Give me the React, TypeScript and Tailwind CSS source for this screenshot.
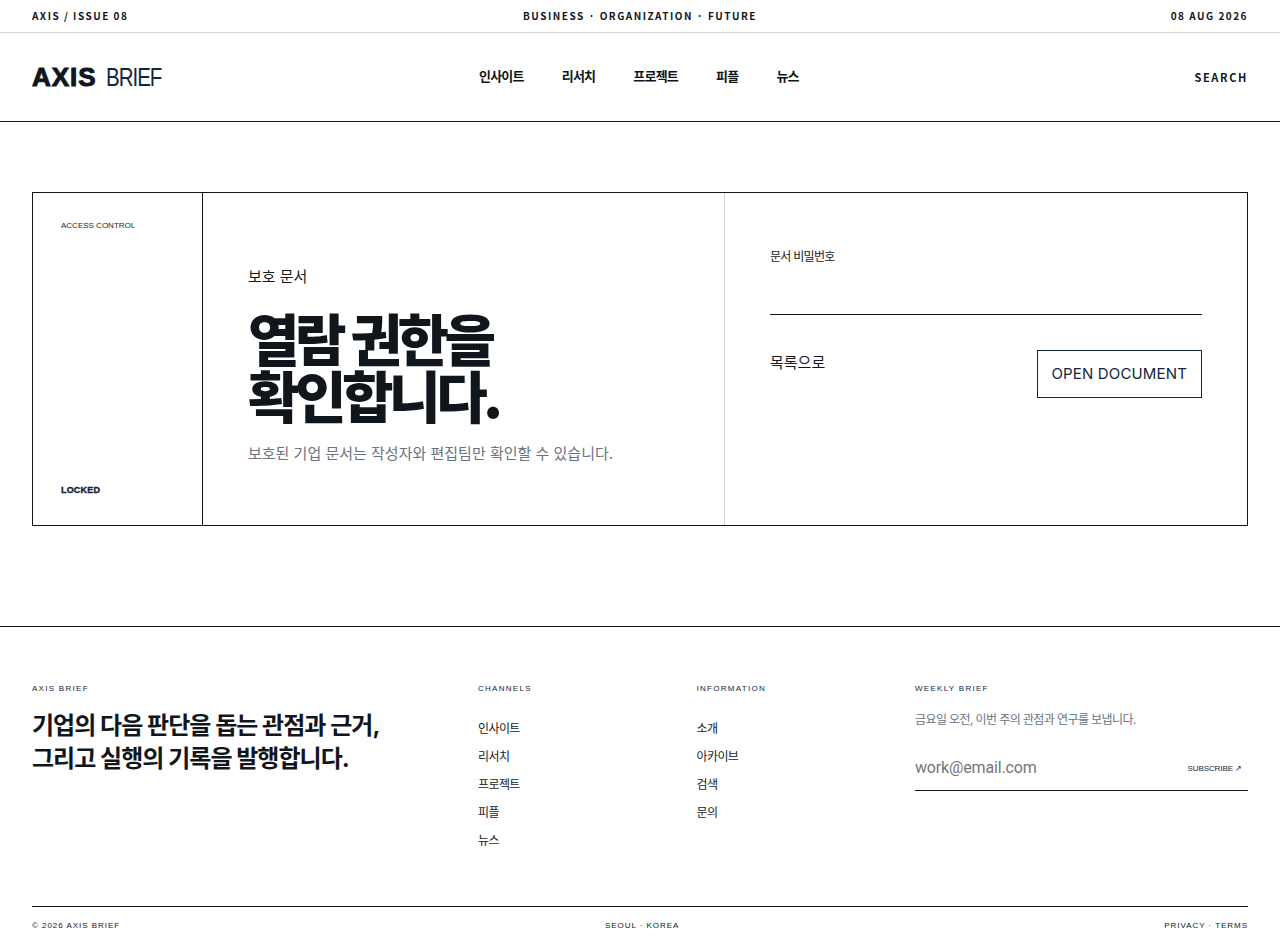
const sans = "font-['Liberation_Sans_Narrow','Noto_Sans_CJK_KR',sans-serif]";
const arial = "font-['Liberation_Sans',sans-serif]";
const kr = "font-['Inter','Noto_Sans_CJK_KR',sans-serif]";
const label = `${arial} text-[8px] leading-[12px] font-normal tracking-[0.16em] text-[#12263f]`;

function FooterCol({ title, items }: { title: string; items: string[] }) {
  return (
    <div>
      <div className={label}>{title}</div>
      <ul className="mt-[23px] flex flex-col gap-[7px]">
        {items.map((i) => (
          <li key={i} className={`${kr} text-[12px] leading-[21px] tracking-[-0.05em] text-[#15191e]`}>{i}</li>
        ))}
      </ul>
    </div>
  );
}

export default function App() {
  return (
    <div className="min-h-[944px] bg-white text-[#11161c] overflow-hidden">
      <div className={`${sans} grid grid-cols-3 h-[33px] items-center border-b border-[#d4d4d4] px-8 text-[10px] font-bold tracking-[0.15em] pb-px`}>
        <span>AXIS / ISSUE 08</span>
        <span className="text-center">BUSINESS · ORGANIZATION · FUTURE</span>
        <span className="text-right">08 AUG 2026</span>
      </div>
      <header className="relative flex h-[89px] items-center justify-between border-b border-[#11161c] px-8">
        <div className={`${arial} flex items-baseline text-[26px] leading-none`}>
          <span className="font-bold tracking-[1px] [-webkit-text-stroke:1px_#11161c] mr-[9px]">AXIS</span>
          <span className="inline-block origin-left scale-x-[0.79] tracking-[-0.05em] text-[#12263f]">BRIEF</span>
        </div>
        <nav className={`${kr} absolute left-[479px] top-0 flex h-full items-center gap-[38px] text-[13px] font-bold tracking-[-0.06em]`}>
          <span>인사이트</span><span>리서치</span><span>프로젝트</span><span>피플</span><span>뉴스</span>
        </nav>
        <span className={`${sans} text-[11px] font-bold tracking-[0.15em]`}>SEARCH</span>
      </header>
      <main className="px-8 pt-[70px] pb-[100px]">
        <section className="grid h-[334px] grid-cols-[170px_1fr_1fr] border border-[#11161c]">
          <div className="flex flex-col justify-between border-r border-[#11161c] px-[28px] pt-[28px] pb-[29px]">
            <span className={`${arial} text-[8px] leading-[10px] font-normal text-[#12263f]`}>ACCESS CONTROL</span>
            <span className={`${arial} text-[9px] leading-[11px] font-bold tracking-[0.02em] text-[#12263f] [-webkit-text-stroke:0.4px_#12263f]`}>LOCKED</span>
          </div>
          <div className="border-r border-[#d4d4d4] pl-[45px] pt-[73px]">
            <p className={`${kr} text-[15px] leading-[22px] text-[#15191e]`}>보호 문서</p>
            <h1 className="mt-[20px] font-['Noto_Sans_CJK_KR',sans-serif] text-[56px] leading-[57px] font-extrabold tracking-[-0.08em]">열람 권한을<br />확인합니다.</h1>
            <p className={`${kr} mt-[20px] text-[15px] leading-[24px] text-[#6b7280]`}>보호된 기업 문서는 작성자와 편집팀만 확인할 수 있습니다.</p>
          </div>
          <div className="px-[45px] pt-[54px]">
            <label className={`${kr} block text-[12px] leading-[20px] tracking-[-0.06em] text-[#15191e]`}>문서 비밀번호</label>
            <div className="mt-[47px] border-b border-[#11161c]"></div>
            <div className="mt-[35px] flex items-start justify-between">
              <span className={`${kr} mt-px text-[15px] leading-[24px] text-[#15191e]`}>목록으로</span>
              <span className="flex h-[48px] items-center border border-[#12263f] px-[14px] font-['Inter',sans-serif] text-[15px] tracking-[0.01em] text-[#12263f]">OPEN DOCUMENT</span>
            </div>
          </div>
        </section>
      </main>
      <footer className="border-t border-[#11161c] px-8 pt-[56px]">
        <div className="grid grid-cols-[446px_218.5px_218.5px_333px] h-[223px]">
          <div>
            <div className={label}>AXIS BRIEF</div>
            <p className={`${kr} mt-[14px] text-[24px] leading-[33px] font-bold tracking-[-0.04em]`}>기업의 다음 판단을 돕는 관점과 근거,<br />그리고 실행의 기록을 발행합니다.</p>
          </div>
          <FooterCol title="CHANNELS" items={["인사이트", "리서치", "프로젝트", "피플", "뉴스"]} />
          <FooterCol title="INFORMATION" items={["소개", "아카이브", "검색", "문의"]} />
          <div>
            <div className={label}>WEEKLY BRIEF</div>
            <p className={`${kr} mt-[15px] text-[12px] leading-[20px] tracking-[-0.05em] text-[#6b7280]`}>금요일 오전, 이번 주의 관점과 연구를 보냅니다.</p>
            <div className="mt-[16px] flex h-[45px] items-center justify-between border-b border-[#11161c] pr-[6px]">
              <span className="font-['Roboto',sans-serif] text-[16px] tracking-[-0.01em] text-[#757575]">work@email.com</span>
              <span className={`${arial} mt-[2px] text-[8px] tracking-[-0.01em] text-[#12263f]`}>SUBSCRIBE ↗</span>
            </div>
          </div>
        </div>
        <div className={`${arial} flex h-[38px] items-center justify-between border-t border-[#11161c] text-[8px] font-normal tracking-[0.12em]`}>
          <span>© 2026 AXIS BRIEF</span>
          <span>SEOUL · KOREA</span>
          <span>PRIVACY · TERMS</span>
        </div>
      </footer>
    </div>
  );
}
